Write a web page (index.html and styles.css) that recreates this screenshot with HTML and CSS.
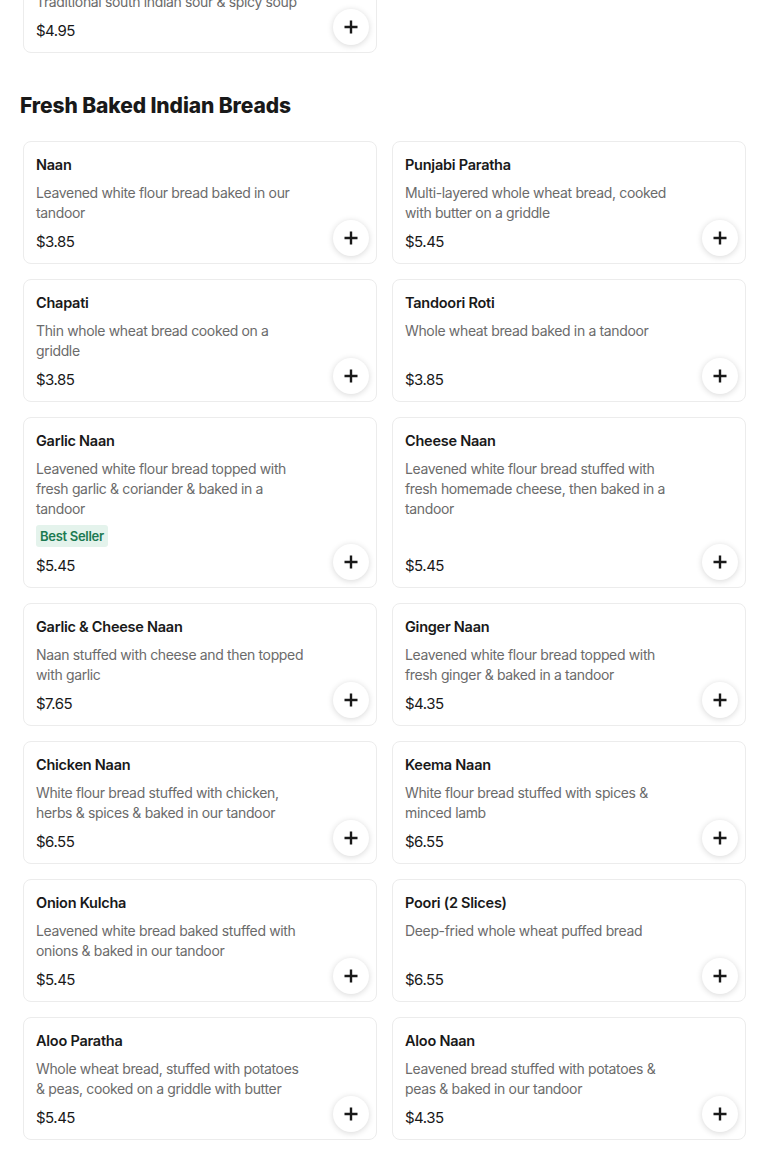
FILE: index.html
```html
<!DOCTYPE html>
<html lang="en">
<head>
<meta charset="utf-8">
<title>Menu</title>
<link rel="stylesheet" href="styles.css">
</head>
<body>
<main class="page">
  <section class="section section-prev">
    <div class="grid">
      <article class="card">
        <h3 class="title">Rasam Soup</h3>
        <p class="desc">Traditional south indian sour &amp; spicy soup</p>
        <div class="price">$4.95</div>
        <button class="add" aria-label="Add"><svg viewBox="0 0 16 16"><path d="M8 1.5v13M1.5 8h13"/></svg></button>
      </article>
    </div>
  </section>

  <section class="section">
    <h2 class="heading">Fresh Baked Indian Breads</h2>
    <div class="grid">
      <article class="card">
        <h3 class="title">Naan</h3>
        <p class="desc">Leavened white flour bread baked in our tandoor</p>
        <div class="price">$3.85</div>
        <button class="add" aria-label="Add"><svg viewBox="0 0 16 16"><path d="M8 1.5v13M1.5 8h13"/></svg></button>
      </article>
      <article class="card">
        <h3 class="title">Punjabi Paratha</h3>
        <p class="desc">Multi-layered whole wheat bread, cooked with butter on a griddle</p>
        <div class="price">$5.45</div>
        <button class="add" aria-label="Add"><svg viewBox="0 0 16 16"><path d="M8 1.5v13M1.5 8h13"/></svg></button>
      </article>
      <article class="card">
        <h3 class="title">Chapati</h3>
        <p class="desc">Thin whole wheat bread cooked on a griddle</p>
        <div class="price">$3.85</div>
        <button class="add" aria-label="Add"><svg viewBox="0 0 16 16"><path d="M8 1.5v13M1.5 8h13"/></svg></button>
      </article>
      <article class="card">
        <h3 class="title">Tandoori Roti</h3>
        <p class="desc">Whole wheat bread baked in a tandoor</p>
        <div class="price">$3.85</div>
        <button class="add" aria-label="Add"><svg viewBox="0 0 16 16"><path d="M8 1.5v13M1.5 8h13"/></svg></button>
      </article>
      <article class="card">
        <h3 class="title">Garlic Naan</h3>
        <p class="desc">Leavened white flour bread topped with fresh garlic &amp; coriander &amp; baked in a tandoor</p>
        <span class="badge">Best Seller</span>
        <div class="price">$5.45</div>
        <button class="add" aria-label="Add"><svg viewBox="0 0 16 16"><path d="M8 1.5v13M1.5 8h13"/></svg></button>
      </article>
      <article class="card">
        <h3 class="title">Cheese Naan</h3>
        <p class="desc">Leavened white flour bread stuffed with fresh homemade cheese, then baked in a tandoor</p>
        <div class="price">$5.45</div>
        <button class="add" aria-label="Add"><svg viewBox="0 0 16 16"><path d="M8 1.5v13M1.5 8h13"/></svg></button>
      </article>
      <article class="card">
        <h3 class="title">Garlic &amp; Cheese Naan</h3>
        <p class="desc">Naan stuffed with cheese and then topped with garlic</p>
        <div class="price">$7.65</div>
        <button class="add" aria-label="Add"><svg viewBox="0 0 16 16"><path d="M8 1.5v13M1.5 8h13"/></svg></button>
      </article>
      <article class="card">
        <h3 class="title">Ginger Naan</h3>
        <p class="desc">Leavened white flour bread topped with fresh ginger &amp; baked in a tandoor</p>
        <div class="price">$4.35</div>
        <button class="add" aria-label="Add"><svg viewBox="0 0 16 16"><path d="M8 1.5v13M1.5 8h13"/></svg></button>
      </article>
      <article class="card">
        <h3 class="title">Chicken Naan</h3>
        <p class="desc">White flour bread stuffed with chicken, herbs &amp; spices &amp; baked in our tandoor</p>
        <div class="price">$6.55</div>
        <button class="add" aria-label="Add"><svg viewBox="0 0 16 16"><path d="M8 1.5v13M1.5 8h13"/></svg></button>
      </article>
      <article class="card">
        <h3 class="title">Keema Naan</h3>
        <p class="desc">White flour bread stuffed with spices &amp; minced lamb</p>
        <div class="price">$6.55</div>
        <button class="add" aria-label="Add"><svg viewBox="0 0 16 16"><path d="M8 1.5v13M1.5 8h13"/></svg></button>
      </article>
      <article class="card">
        <h3 class="title">Onion Kulcha</h3>
        <p class="desc">Leavened white bread baked stuffed with onions &amp; baked in our tandoor</p>
        <div class="price">$5.45</div>
        <button class="add" aria-label="Add"><svg viewBox="0 0 16 16"><path d="M8 1.5v13M1.5 8h13"/></svg></button>
      </article>
      <article class="card">
        <h3 class="title">Poori (2 Slices)</h3>
        <p class="desc">Deep-fried whole wheat puffed bread</p>
        <div class="price">$6.55</div>
        <button class="add" aria-label="Add"><svg viewBox="0 0 16 16"><path d="M8 1.5v13M1.5 8h13"/></svg></button>
      </article>
      <article class="card">
        <h3 class="title">Aloo Paratha</h3>
        <p class="desc">Whole wheat bread, stuffed with potatoes &amp; peas, cooked on a griddle with butter</p>
        <div class="price">$5.45</div>
        <button class="add" aria-label="Add"><svg viewBox="0 0 16 16"><path d="M8 1.5v13M1.5 8h13"/></svg></button>
      </article>
      <article class="card">
        <h3 class="title">Aloo Naan</h3>
        <p class="desc">Leavened bread stuffed with potatoes &amp; peas &amp; baked in our tandoor</p>
        <div class="price">$4.35</div>
        <button class="add" aria-label="Add"><svg viewBox="0 0 16 16"><path d="M8 1.5v13M1.5 8h13"/></svg></button>
      </article>
    </div>
  </section>
</main>
</body>
</html>
```

FILE: styles.css
```css
* { box-sizing: border-box; }

html, body {
  margin: 0;
  padding: 0;
  background: #ffffff;
}

body {
  font-family: "Inter", "Noto Sans", "Liberation Sans", sans-serif;
  color: #191919;
  overflow: hidden;
}

.page {
  padding: 0 24px 0 23px;
}

.section-prev {
  margin-top: -50px;
}

.heading {
  margin: 39px 0 21px -3px;
  font-size: 21px;
  line-height: 28px;
  font-weight: 800;
  letter-spacing: -0.1px;
  color: #191919;
}

.grid {
  display: grid;
  grid-template-columns: 1fr 1fr;
  column-gap: 15px;
  row-gap: 15px;
}

.card {
  position: relative;
  display: flex;
  flex-direction: column;
  align-items: flex-start;
  padding: 13px 12px 11px;
  border: 1px solid #ececec;
  border-radius: 8px;
  background: #fff;
}

.title {
  margin: 0;
  font-size: 14.5px;
  line-height: 20px;
  font-weight: 600;
  letter-spacing: -0.25px;
  color: #191919;
}

.desc {
  margin: 8px 0 0;
  max-width: 270px;
  font-size: 14px;
  line-height: 20px;
  font-weight: 400;
  letter-spacing: -0.35px;
  color: #6b6b6b;
}

.badge {
  margin-top: 6px;
  padding: 0 4px;
  height: 22px;
  line-height: 22px;
  font-size: 13px;
  font-weight: 600;
  letter-spacing: -0.3px;
  color: #1c7a52;
  background: #e4f3ec;
  border-radius: 3px;
}

.price {
  margin-top: auto;
  padding-top: 9px;
  font-size: 15px;
  line-height: 20px;
  letter-spacing: -0.5px;
  color: #191919;
}

.add {
  position: absolute;
  right: 7px;
  bottom: 7px;
  width: 36px;
  height: 36px;
  padding: 0;
  border: none;
  border-radius: 50%;
  background: #fff;
  box-shadow: 0 1px 6px rgba(0, 0, 0, 0.16);
  display: flex;
  align-items: center;
  justify-content: center;
  cursor: pointer;
}

.add svg {
  width: 16px;
  height: 16px;
  fill: none;
  stroke: #191919;
  stroke-width: 2.4;
}
```
